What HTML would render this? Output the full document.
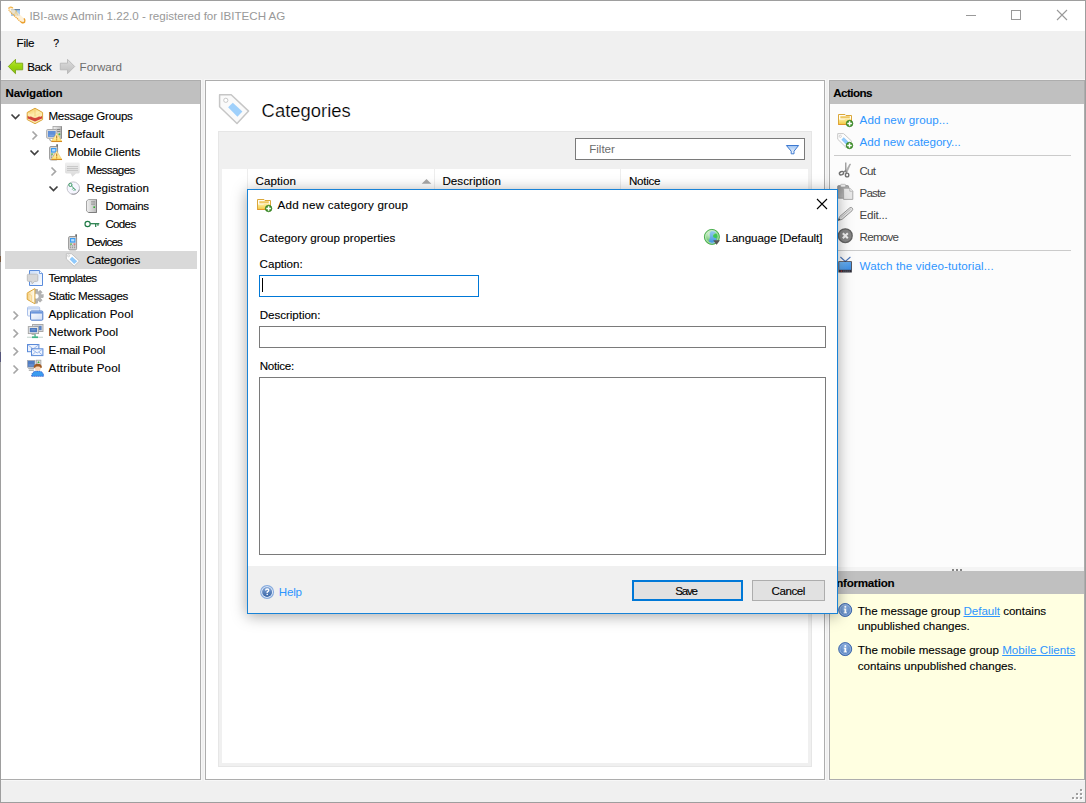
<!DOCTYPE html>
<html><head><meta charset="utf-8"><title>IBI-aws Admin</title>
<style>
html,body{margin:0;padding:0;}
body{width:1086px;height:803px;position:relative;overflow:hidden;background:#f0f0f0;font-family:"Liberation Sans",sans-serif;font-size:11.6px;color:#000;}
.a{position:absolute;}
.t{position:absolute;white-space:nowrap;-webkit-text-stroke:.12px;}
svg{position:absolute;overflow:visible;}
</style></head><body>
<div class="a" style="left:1px;top:1px;width:1084px;height:30px;background:#fff;"></div>

<!-- NAV PANEL -->
<div class="a" style="left:1px;top:80px;width:199px;height:698px;background:#fff;border-right:1px solid #adadad;border-bottom:1px solid #adadad;border-top:1px solid #adadad;outline:1px solid #f7f7f7;"></div>
<div class="a" style="left:1px;top:81px;width:199px;height:23px;background:#c0c0c0;"></div>
<div class="a" style="left:5px;top:251px;width:192px;height:18px;background:#d9d9d9;"></div>


<!-- CENTER PANEL -->
<div class="a" style="left:205px;top:80px;width:618px;height:698px;background:#fff;border:1px solid #adadad;outline:1px solid #f7f7f7;"></div>
<div class="a" style="left:218px;top:131px;width:592px;height:634px;background:#f0f0f0;border:1px solid #e6e6e6;"></div>
<div class="a" style="left:222px;top:169px;width:586px;height:594px;background:#fff;"></div>
<div class="a" style="left:247px;top:169px;width:1px;height:22px;background:#ededed;"></div>
<div class="a" style="left:434px;top:169px;width:1px;height:22px;background:#ededed;"></div>
<div class="a" style="left:620px;top:169px;width:1px;height:22px;background:#ededed;"></div>
<div class="a" style="left:575px;top:138px;width:228px;height:20px;border:1px solid #7a7a7a;background:#fff;"></div>

<!-- RIGHT PANEL -->
<div class="a" style="left:829px;top:80px;width:254px;height:698px;background:#fcfcfc;border:1px solid #adadad;outline:1px solid #f7f7f7;"></div>
<div class="a" style="left:830px;top:81px;width:254px;height:23px;background:#c0c0c0;"></div>
<div class="a" style="left:834px;top:155px;width:237px;height:1px;background:#cbcbcb;"></div>
<div class="a" style="left:834px;top:250px;width:237px;height:1px;background:#cbcbcb;"></div>
<div class="a" style="left:830px;top:571px;width:254px;height:23px;background:#c0c0c0;"></div>
<div class="a" style="left:830px;top:594px;width:254px;height:185px;background:#ffffe1;"></div>
<!-- window frame -->
<div class="a" style="left:0;top:0;width:1086px;height:1px;background:#9e9e9e;"></div>
<div class="a" style="left:0;top:0;width:1px;height:803px;background:#9e9e9e;"></div>
<div class="a" style="left:1085px;top:0;width:1px;height:803px;background:#9e9e9e;"></div>
<div class="a" style="left:0;top:802px;width:1086px;height:1px;background:#9e9e9e;"></div>
<svg width="1086" height="803" viewBox="0 0 1086 803" style="left:0;top:0">
<defs>
<linearGradient id="gGreen" x1="0" y1="0" x2="0" y2="1"><stop offset="0" stop-color="#bce63c"/><stop offset=".5" stop-color="#9ad60e"/><stop offset="1" stop-color="#86c010"/></linearGradient>
<linearGradient id="gGray" x1="0" y1="0" x2="0" y2="1"><stop offset="0" stop-color="#dedede"/><stop offset="1" stop-color="#bcbcbc"/></linearGradient>
<linearGradient id="gBoxTop" x1="0" y1="0" x2="1" y2="1"><stop offset="0" stop-color="#f3c04e"/><stop offset=".6" stop-color="#fdeeb0"/><stop offset="1" stop-color="#f7d36a"/></linearGradient>
<linearGradient id="gTower" x1="0" y1="0" x2="1" y2="0"><stop offset="0" stop-color="#f2f2f2"/><stop offset="1" stop-color="#b8b8b8"/></linearGradient>
<linearGradient id="gWarn" x1="0" y1="0" x2="0" y2="1"><stop offset="0" stop-color="#fffbe2"/><stop offset="1" stop-color="#ffe06a"/></linearGradient>
<linearGradient id="gBubble" x1="0" y1="0" x2="0" y2="1"><stop offset="0" stop-color="#efefef"/><stop offset="1" stop-color="#dadada"/></linearGradient>
<linearGradient id="gDoc" x1="0" y1="0" x2="1" y2="1"><stop offset="0" stop-color="#c9dcf8"/><stop offset="1" stop-color="#ffffff"/></linearGradient>
<linearGradient id="gHalfBox" x1="0" y1="0" x2="1" y2="0"><stop offset="0" stop-color="#f6cc78"/><stop offset=".55" stop-color="#fdeec8"/><stop offset="1" stop-color="#fffdf6"/></linearGradient>
<linearGradient id="gWin" x1="0" y1="0" x2="1" y2="1"><stop offset="0" stop-color="#ffffff"/><stop offset="1" stop-color="#cfdcf4"/></linearGradient>
<linearGradient id="gFolder" x1="0" y1="0" x2="0" y2="1"><stop offset="0" stop-color="#fdeea6"/><stop offset="1" stop-color="#f3cc48"/></linearGradient>
<linearGradient id="gClip" x1="0" y1="0" x2="1" y2="1"><stop offset="0" stop-color="#8a8a8a"/><stop offset="1" stop-color="#c8c8c8"/></linearGradient>
<linearGradient id="gTv" x1="0" y1="0" x2="1" y2="1"><stop offset="0" stop-color="#74baf6"/><stop offset="1" stop-color="#3a8ae2"/></linearGradient>
<radialGradient id="gInfo" cx=".5" cy=".35" r=".7"><stop offset="0" stop-color="#8fb2e0"/><stop offset="1" stop-color="#4874b6"/></radialGradient>
<linearGradient id="gFunnel" x1="0" y1="0" x2="0" y2="1"><stop offset="0" stop-color="#9cc2f2"/><stop offset="1" stop-color="#ffffff"/></linearGradient>
<g id="warn"><polygon points="56.7,133.2 61.7,141.3 51.6,141.3" fill="url(#gWarn)" stroke="#f0c454" stroke-width=".6" stroke-linejoin="round"/><line x1="51.4" y1="141.5" x2="62" y2="141.5" stroke="#d58a22" stroke-width="1.1"/><line x1="56.7" y1="135.4" x2="56.7" y2="138.4" stroke="#c07a1a" stroke-width="1.1"/><circle cx="56.7" cy="139.8" r=".65" fill="#c07a1a"/></g>
<g id="phone"><rect x="56.4" y="144.3" width="1.4" height="5" fill="#4a4a4a"/><rect x="49.6" y="146.5" width="8" height="13.4" rx="1.3" fill="#d4d4d4" stroke="#8c8c8c" stroke-width=".9"/><rect x="51" y="148" width="5.4" height="4.6" fill="#3c9cf0"/><rect x="52.1" y="149.1" width="3.2" height="2.3" fill="#b4dcff"/><rect x="51" y="153.6" width="2" height="1" fill="#3cb43c"/><rect x="54.6" y="153.6" width="1.8" height="1" fill="#e03c3c"/><g fill="#8e8e8e"><rect x="51" y="155.4" width="1.2" height="1"/><rect x="53" y="155.4" width="1.2" height="1"/><rect x="55" y="155.4" width="1.2" height="1"/><rect x="51" y="157.2" width="1.2" height="1"/><rect x="53" y="157.2" width="1.2" height="1"/><rect x="55" y="157.2" width="1.2" height="1"/></g></g>
<g id="plus"><circle cx="0" cy="0" r="3.3" fill="#3f902a" stroke="#2e7a1c" stroke-width=".6"/><path d="M-2.3 0H2.3M0 -2.3V2.3" stroke="#fff" stroke-width="1.5"/></g>
<g id="folder"><path d="M.5 .5H7L8 1.5H13.5V10.5H.5Z" fill="#fffdf2" stroke="#dba73a"/><rect x="2.3" y="2.2" width="9.5" height="2.2" fill="#efc862"/><path d="M1 5.6H6.4L7.4 4.7H13V10H1Z" fill="url(#gFolder)"/><line x1=".3" y1="10.5" x2="13.7" y2="10.5" stroke="#e3962e"/><use href="#plus" x="11.6" y="9.5"/></g>
</defs>
<!-- app icon -->
<rect x="11" y="9" width="9" height="7" fill="#a9cdf2"/><rect x="11" y="9" width="9" height="1.2" fill="#5f82aa"/>
<path d="M14.4 15.2L15.9 11.2L17.6 15.2" stroke="#a88a18" stroke-width="1.2" fill="none"/>
<path d="M9.2 7.6Q10.6 6.4 13 8L24 18.4Q25.6 20.6 24.6 22Q23.4 23.4 21 22.2L10 11.6Q8.2 9.2 9.2 7.6Z" fill="#fdeccc" fill-opacity=".72"/>
<path d="M9.2 7.6Q8.2 9.2 10 11.6L21 22.2Q23.4 23.4 24.6 22" fill="none" stroke="#eea83a" stroke-width="1.3" stroke-dasharray="1.3 .7"/>
<path d="M9.2 7.6Q10.6 6.4 13 8" fill="none" stroke="#f0b44a" stroke-width="1.2"/>
<path d="M21 22.2Q23.4 23.4 24.6 22Q25.6 20.6 24 18.4" fill="none" stroke="#eaa030" stroke-width="1.5"/>
<!-- back / forward -->
<polygon points="8.3,66.5 15.5,59.3 15.5,63.2 22.7,63.2 22.7,69.8 15.5,69.8 15.5,73.7" fill="url(#gGreen)" stroke="#79a516" stroke-width=".9" stroke-linejoin="round"/>
<polygon points="74.7,66.5 67.5,59.3 67.5,63.2 60.3,63.2 60.3,69.8 67.5,69.8 67.5,73.7" fill="url(#gGray)" stroke="#b8b8b8" stroke-width=".9" stroke-linejoin="round"/>
<rect x="0" y="61" width="1" height="9" fill="#55557a"/><rect x="0" y="256" width="1" height="6" fill="#7a5a40"/><rect x="0" y="352" width="1" height="10" fill="#55557a"/>
<!-- window controls -->
<rect x="966" y="15" width="10" height="1" fill="#999"/>
<rect x="1011.5" y="10.5" width="9" height="9" fill="none" stroke="#999"/>
<path d="M1057 10L1067 20M1067 10L1057 20" stroke="#999" stroke-width="1.1"/>
<!-- chevrons -->
<g fill="none" stroke="#404040" stroke-width="1.7"><path d="M11.5 114.5l4 4l4-4"/><path d="M30.5 150.5l4 4l4-4"/><path d="M49.5 186.5l4 4l4-4"/></g>
<g fill="none" stroke="#a6a6a6" stroke-width="1.7"><path d="M32.5 131.5l4 4l-4 4"/><path d="M51.5 167.5l4 4l-4 4"/><path d="M13.5 311.5l4 4l-4 4"/><path d="M13.5 329.5l4 4l-4 4"/><path d="M13.5 347.5l4 4l-4 4"/><path d="M13.5 365.5l4 4l-4 4"/></g>
<!-- message groups box -->
<polygon points="35,108.2 42.6,112.5 42.6,119.6 35,123.7 27.2,119.6 27.2,112.5" fill="#fdebae"/>
<polygon points="35,108.2 42.6,112.5 35,116.6 27.2,112.5" fill="url(#gBoxTop)"/>
<polygon points="27.2,115.6 29.2,116.8 31,116.4 33,117.6 35,118 37,117.6 39,116.4 40.8,116.8 42.6,115.6 42.6,118.3 35,121.5 27.2,118.3" fill="#d2453a"/><path d="M35 108.6V116.4" stroke="#f0c060" stroke-width=".6"/>
<polygon points="35,108.2 42.6,112.5 42.6,119.6 35,123.7 27.2,119.6 27.2,112.5" fill="none" stroke="#dba63c" stroke-width="1" stroke-linejoin="round"/>
<!-- default: tower + monitor + warn -->
<rect x="53" y="126.5" width="8.5" height="12" fill="url(#gTower)" stroke="#a2a2a2" stroke-width=".8"/><line x1="61.4" y1="126.5" x2="61.4" y2="138.5" stroke="#8a8a8a"/>
<path d="M57 129.5H60.3M57 131.5H60.3" stroke="#7e7e7e" stroke-width=".9"/><circle cx="59.4" cy="134.3" r="1" fill="#3cb43c"/>
<rect x="46.6" y="129.5" width="10.4" height="8.8" rx="1" fill="#dcdcdc" stroke="#a6a6a6" stroke-width=".9"/><rect x="48" y="131" width="7.6" height="5.9" fill="#5f8fd8"/><rect x="49.3" y="134.8" width="4.6" height=".8" fill="#8ab0e6"/>
<path d="M49.7 138.8q-.2 2.4 2.2 2.4" fill="none" stroke="#8c8c8c" stroke-width=".9"/>
<use href="#warn"/>
<!-- mobile clients -->
<use href="#phone"/><use href="#warn" y="18"/>
<!-- messages bubble -->
<path d="M66.4 162.5H78.3q1.4 0 1.4 1.4V172.1q0 1.4-1.4 1.4H76L72.4 176.8L70.6 173.5H66.4q-1.4 0-1.4-1.4V163.9q0-1.4 1.4-1.4Z" fill="url(#gBubble)"/>
<path d="M67 166.6H78M67 168.5H78M67 170.4H78" stroke="#c2c2c2" stroke-width=".9"/>
<!-- registration -->
<circle cx="73.3" cy="188.1" r="6.2" fill="#f6f6ff" stroke="#c4c4cc" stroke-width="1"/><path d="M79.3 189.6A6.2 6.2 0 0 1 71.5 194" fill="none" stroke="#9a9aa0" stroke-width="1"/>
<circle cx="70.4" cy="184.9" r="1.6" fill="none" stroke="#3a9a62" stroke-width="1"/><path d="M71.5 186L75.8 190.2M73.6 188.1l-1.3 1.4M75 189.4l-1.2 1.3" stroke="#3a9a62" stroke-width="1" fill="none"/>
<!-- domains -->
<path d="M88.5 199.5H96.5V212.5H88.5L86.5 211V201Z" fill="url(#gTower)" stroke="#9c9c9c" stroke-width=".9" stroke-linejoin="round"/><path d="M96.5 199.5V212.5H88.5" fill="none" stroke="#7e7e7e" stroke-width="1"/>
<path d="M91 201.9H95M91 204.1H95" stroke="#7c7c7c" stroke-width=".75"/><rect x="93.4" y="206.4" width="1.6" height="1.6" fill="#30b030"/>
<!-- codes key -->
<circle cx="87.6" cy="224" r="2.6" fill="none" stroke="#1f7a45" stroke-width="1.15"/><path d="M90.2 223.7H99.3" stroke="#1f7a45" stroke-width="1.2"/><rect x="95.1" y="224" width="1.2" height="3" fill="#1f7a45"/><rect x="97.4" y="224" width="1.1" height="1.8" fill="#1f7a45"/>
<!-- devices -->
<use href="#phone" x="19" y="90"/>
<!-- categories small tag -->
<polygon points="66.3,253.7 71.5,253.7 79.5,261 74.2,266.2 66.3,259" fill="#fdfdfd" stroke="#c2c2c2" stroke-width="1" stroke-linejoin="round"/><circle cx="68.6" cy="255.8" r="1" fill="#fff" stroke="#c4c4c4" stroke-width=".7"/><polygon points="72.1,256.8 77.2,261.3 74.2,264 69.6,259.2" fill="#8fc9fb"/>
<!-- templates -->
<path d="M29.5 270.5H39.5L42.5 273.5V285.5H29.5Z" fill="url(#gDoc)" stroke="#5a8cdc" stroke-width="1" stroke-linejoin="round"/><path d="M39.5 270.5V273.5H42.5" fill="#fff" stroke="#5a8cdc" stroke-width=".8"/>
<path d="M28.5 274.2H36.6q1.2 0 1.2 1.2V280.2q0 1.2-1.2 1.2H34.6L32.2 283.8L31.4 281.4H28.5q-1.2 0-1.2-1.2V275.4q0-1.2 1.2-1.2Z" fill="#d8d8d8" stroke="#b6b6b6" stroke-width=".8"/>
<!-- static messages: gear right half + half box -->
<g transform="translate(36.2 296.2)"><g fill="#b0b0b0" stroke="#989898" stroke-width=".4"><rect x="-1.5" y="-7" width="3" height="14"/><rect x="-1.5" y="-7" width="3" height="14" transform="rotate(45)"/><rect x="-1.5" y="-7" width="3" height="14" transform="rotate(90)"/><rect x="-1.5" y="-7" width="3" height="14" transform="rotate(135)"/></g><circle r="5.3" fill="#b4b4b4"/><circle r="2.7" fill="#fff" stroke="#9c9c9c" stroke-width=".4"/></g>
<rect x="26" y="287" width="8.9" height="18" fill="#fff"/>
<polygon points="34.9,288.6 27.2,293 27.2,299.4 34.9,303.8" fill="url(#gHalfBox)" stroke="#dba63c" stroke-width="1" stroke-linejoin="round"/><path d="M27.4 293.2L31.6 295.6V301.6" fill="none" stroke="#f6d184" stroke-width=".8"/>
<!-- application pool -->
<rect x="27.5" y="307" width="12.2" height="9" rx="1" fill="#f1f5fc" stroke="#a9c0ea" stroke-width="1"/><rect x="28" y="307.5" width="11.2" height="2" fill="#c6d7f4"/>
<rect x="30.6" y="311" width="12.2" height="9.2" rx="1" fill="url(#gWin)" stroke="#4a78c8" stroke-width="1"/><rect x="31.1" y="311.5" width="11.2" height="2.1" fill="#6b96dc"/>
<!-- network pool -->
<rect x="32.6" y="324.5" width="10.4" height="7" fill="#e2e2e2" stroke="#a2a2a2" stroke-width=".9"/><rect x="34.2" y="325.8" width="7.4" height="4.4" fill="#5a84c6"/>
<rect x="28.3" y="326.6" width="10.3" height="7" fill="#e6e6e6" stroke="#a2a2a2" stroke-width=".9"/><rect x="29.8" y="328" width="7.3" height="4.2" fill="#4a78c0"/><rect x="31.3" y="329.4" width="4.3" height=".9" fill="#86a8dc"/>
<path d="M31.6 334.4H35.6" stroke="#a0a0a0" stroke-width=".9"/>
<rect x="27" y="336.7" width="16" height="1.1" fill="#c6d6d2"/><rect x="32" y="336.4" width="6" height="1.7" fill="#42b585"/><rect x="34.4" y="334.4" width="1.3" height="2.4" fill="#42b585"/>
<!-- e-mail pool -->
<rect x="27.5" y="344.5" width="11.4" height="7.2" fill="#ecf2fd" stroke="#5a8ad8" stroke-width="1"/><path d="M27.8 344.8L33.2 349L38.6 344.8" fill="none" stroke="#86aae6" stroke-width=".8"/>
<rect x="31.5" y="348.8" width="11.4" height="6.8" fill="#f0f5fe" stroke="#5a8ad8" stroke-width="1"/><path d="M31.8 349.1L37.2 353L42.6 349.1M31.8 355.3L35.6 352M42.6 355.3L38.8 352" fill="none" stroke="#86aae6" stroke-width=".8"/>
<!-- attribute pool -->
<rect x="36.3" y="360.2" width="4.6" height="7" fill="#dadada" stroke="#a4a4a4" stroke-width=".8"/><polygon points="37.4,363 38.6,361 39.6,363" fill="#3cb43c"/>
<rect x="27.4" y="360.4" width="7.6" height="6.8" fill="#4f7cc2" stroke="#a6aab2" stroke-width=".8"/><rect x="28.6" y="364.6" width="5" height=".8" fill="#86a8dc"/>
<rect x="28.2" y="368" width="6" height="1" fill="#b4b4b4"/><rect x="28.8" y="369.7" width="5" height=".9" fill="#8a8a8a"/>
<path d="M31.6 376.3Q31.6 371 37.8 371Q43.6 371 43.6 376.3Z" fill="#3c9cf0" stroke="#2a4cc4" stroke-width=".9" stroke-dasharray="1.2 .8"/>
<circle cx="37.8" cy="367.7" r="3.1" fill="#f8d6b8"/><path d="M34.6 367.6A3.2 3.2 0 0 1 41 367.6Q39.5 366.2 37.8 366.6Q36 366.2 34.6 367.6Z" fill="#a05a22"/><path d="M34.5 367.8A3.3 3.3 0 0 1 41.1 367.8" fill="none" stroke="#a05a22" stroke-width="1.6"/>
<!-- big tag -->
<polygon points="219.6,94.7 231.2,94.7 248.6,111.1 237,123.5 219.6,106.8" fill="#fafafa" stroke="#c6c6c6" stroke-width="1.5" stroke-linejoin="round"/><circle cx="225.8" cy="100.3" r="2.1" fill="#fff" stroke="#c8c8c8" stroke-width="1"/><polygon points="232.8,102.7 242.4,111.5 237.4,116.7 228.1,107.3" fill="#9fd0fb"/>
<!-- funnel + sort -->
<path d="M786.4 145.5H798.6L794 151.2V153.8H791.2V151.2Z" fill="url(#gFunnel)" stroke="#3c78d0" stroke-width="1" stroke-linejoin="round"/>
<polygon points="421.7,183.8 426.5,179 431.3,183.8" fill="#a8a8a8"/>
<!-- actions: folder+plus, tag+plus -->
<use href="#folder" x="838" y="114"/>
<polygon points="837.7,133.6 843.6,133.6 851.7,141.2 846,147.4 837.7,139.2" fill="#fdfdfd" stroke="#c8c8c8" stroke-width="1" stroke-linejoin="round"/><circle cx="840.3" cy="136.3" r="1.1" fill="#fff" stroke="#c0c0c0" stroke-width=".7"/><polygon points="843.7,137.3 848.7,141.9 846,144.6 841.4,139.8" fill="#8fc9fb"/>
<use href="#plus" x="849.5" y="145.5"/>
<!-- scissors -->
<path d="M845.1 162.4L846.4 162.6L846.6 172.2L845 172Z" fill="#9c9c9c"/><path d="M850.6 164L846.9 172.6L845.6 171.6L849.6 164.2Z" fill="#bcbcbc" stroke="#8c8c8c" stroke-width=".5"/>
<ellipse cx="841.5" cy="173.2" rx="2.2" ry="1.6" transform="rotate(-25 841.5 173.2)" fill="none" stroke="#707070" stroke-width="1.4"/><ellipse cx="847.1" cy="175" rx="1.7" ry="1.9" fill="none" stroke="#707070" stroke-width="1.4"/>
<path d="M843.4 172L845.8 170.6M846.4 173.2L845.8 170.6" stroke="#7e7e7e" stroke-width="1.2"/>
<!-- paste -->
<rect x="837.6" y="185.6" width="11" height="12.6" rx="1" fill="url(#gClip)" stroke="#8a8a8a" stroke-width=".8"/><rect x="840.6" y="184.3" width="5" height="2.6" rx=".8" fill="#ececec" stroke="#a2a2a2" stroke-width=".6"/>
<path d="M843.6 188.2H849.8L852.8 191.2V199.4H843.6Z" fill="#e8e8e8" stroke="#a4a4a4" stroke-width=".9" stroke-linejoin="round"/><path d="M849.8 188.2V191.2H852.8" fill="#f6f6f6" stroke="#a4a4a4" stroke-width=".7"/>
<!-- pencil -->
<path d="M838 220.6L839.6 216.6L849.8 207.8Q851.4 206.8 852.4 208.2Q853.2 209.6 852 210.8L842 219.4Z" fill="#e6e6e6" stroke="#8e8e8e" stroke-width=".9" stroke-linejoin="round"/><path d="M838 220.6L839 218.2L840.6 219.8Z" fill="#4a4a4a"/><path d="M840.6 217.8L850.8 209" stroke="#b4b4b4" stroke-width=".8"/>
<!-- remove -->
<circle cx="845.3" cy="235.7" r="6.9" fill="#868686" stroke="#626262" stroke-width="1.3"/><path d="M842.8 233.2L847.8 238.2M847.8 233.2L842.8 238.2" stroke="#f2f2f2" stroke-width="2"/>
<!-- tv -->
<path d="M840.4 257L845.3 261.4L850.4 257" fill="none" stroke="#4a74b8" stroke-width="1.1"/>
<rect x="838.4" y="261.3" width="13.4" height="11.2" fill="#2e2e3a"/><rect x="839.2" y="262" width="11.8" height="7.8" fill="url(#gTv)"/><rect x="840.8" y="270.6" width="1.3" height="1" fill="#e23434"/><path d="M843.4 271.1H850" stroke="#8a8a96" stroke-width=".9" stroke-dasharray="1 1"/>
<!-- splitter dots -->
<rect x="830" y="567" width="254" height="4" fill="#f4f4f4"/><g fill="#858585"><rect x="952" y="569" width="2" height="2"/><rect x="956" y="569" width="2" height="2"/><rect x="960" y="569" width="2" height="2"/></g>
<!-- info icons -->
<g id="info"><circle cx="845.2" cy="610" r="6.5" fill="url(#gInfo)" stroke="#3f68ac" stroke-width="1"/><circle cx="845.2" cy="610" r="5.3" fill="none" stroke="#a6c0e6" stroke-width=".7"/><rect x="844.5" y="608.7" width="1.7" height="4.2" fill="#fff"/><rect x="843.8" y="608.7" width="1.5" height=".9" fill="#fff"/><rect x="843.6" y="612.4" width="3.4" height=".9" fill="#fff"/><circle cx="845.3" cy="606.8" r="1" fill="#fff"/></g>
<use href="#info" y="39.1"/>
<!-- resize grip -->
<g fill="#fff"><rect x="1081" y="790" width="2" height="2"/><rect x="1077" y="794" width="2" height="2"/><rect x="1081" y="794" width="2" height="2"/><rect x="1073" y="798" width="2" height="2"/><rect x="1077" y="798" width="2" height="2"/><rect x="1081" y="798" width="2" height="2"/></g>
<g fill="#a0a0a0"><rect x="1080" y="789" width="2" height="2"/><rect x="1076" y="793" width="2" height="2"/><rect x="1080" y="793" width="2" height="2"/><rect x="1072" y="797" width="2" height="2"/><rect x="1076" y="797" width="2" height="2"/><rect x="1080" y="797" width="2" height="2"/></g>
</svg>


<div class="t" style="left:29.40px;top:8.00px;line-height:16px;letter-spacing:-0.011px;color:#999;-webkit-text-stroke:0;">IBI-aws Admin 1.22.0 - registered for IBITECH AG</div>
<div class="t" style="left:16.60px;top:35.00px;line-height:16px;letter-spacing:-0.278px;">File</div>
<div class="t" style="left:53.30px;top:35.00px;line-height:16px;letter-spacing:-1.300px;font-size:10.5px;">?</div>
<div class="t" style="left:27.20px;top:59.00px;line-height:16px;letter-spacing:-0.393px;">Back</div>
<div class="t" style="left:79.60px;top:59.00px;line-height:16px;letter-spacing:-0.029px;color:#6d6d6d;-webkit-text-stroke:0;">Forward</div>
<div class="t" style="left:5.50px;top:85.00px;line-height:16px;letter-spacing:-0.231px;font-weight:bold;">Navigation</div>
<div class="t" style="left:48.50px;top:108.00px;line-height:16px;letter-spacing:-0.299px;">Message Groups</div>
<div class="t" style="left:67.50px;top:126.00px;line-height:16px;letter-spacing:0.014px;">Default</div>
<div class="t" style="left:67.50px;top:144.00px;line-height:16px;letter-spacing:-0.001px;">Mobile Clients</div>
<div class="t" style="left:86.60px;top:162.00px;line-height:16px;letter-spacing:-0.592px;">Messages</div>
<div class="t" style="left:86.60px;top:180.00px;line-height:16px;letter-spacing:0.035px;">Registration</div>
<div class="t" style="left:105.40px;top:198.00px;line-height:16px;letter-spacing:-0.342px;">Domains</div>
<div class="t" style="left:105.40px;top:216.00px;line-height:16px;letter-spacing:-0.679px;">Codes</div>
<div class="t" style="left:86.60px;top:234.00px;line-height:16px;letter-spacing:-0.823px;">Devices</div>
<div class="t" style="left:86.60px;top:252.00px;line-height:16px;letter-spacing:-0.263px;">Categories</div>
<div class="t" style="left:48.50px;top:270.00px;line-height:16px;letter-spacing:-0.530px;">Templates</div>
<div class="t" style="left:48.50px;top:288.00px;line-height:16px;letter-spacing:-0.376px;">Static Messages</div>
<div class="t" style="left:48.50px;top:306.00px;line-height:16px;letter-spacing:0.109px;">Application Pool</div>
<div class="t" style="left:48.50px;top:324.00px;line-height:16px;letter-spacing:0.066px;">Network Pool</div>
<div class="t" style="left:48.50px;top:342.00px;line-height:16px;letter-spacing:-0.250px;">E-mail Pool</div>
<div class="t" style="left:48.50px;top:360.00px;line-height:16px;letter-spacing:0.175px;">Attribute Pool</div>
<div class="t" style="left:261.60px;top:98.00px;line-height:25px;letter-spacing:0.018px;font-size:18.4px;-webkit-text-stroke:.2px #fff;">Categories</div>
<div class="t" style="left:589.30px;top:141.00px;line-height:16px;letter-spacing:-0.040px;color:#6d6d6d;-webkit-text-stroke:0;">Filter</div>
<div class="t" style="left:255.50px;top:173.00px;line-height:16px;letter-spacing:0.064px;">Caption</div>
<div class="t" style="left:442.40px;top:173.00px;line-height:16px;letter-spacing:0.046px;">Description</div>
<div class="t" style="left:629.00px;top:173.00px;line-height:16px;letter-spacing:-0.263px;">Notice</div>
<div class="t" style="left:833.20px;top:85.00px;line-height:16px;letter-spacing:-0.544px;font-weight:bold;">Actions</div>
<div class="t" style="left:859.60px;top:112.00px;line-height:16px;letter-spacing:0.091px;color:#2e95ff;-webkit-text-stroke:0;">Add new group...</div>
<div class="t" style="left:859.60px;top:134.00px;line-height:16px;letter-spacing:-0.027px;color:#2e95ff;-webkit-text-stroke:0;">Add new category...</div>
<div class="t" style="left:859.60px;top:163.00px;line-height:16px;letter-spacing:-0.860px;color:#444;-webkit-text-stroke:0;">Cut</div>
<div class="t" style="left:859.60px;top:185.00px;line-height:16px;letter-spacing:-0.825px;color:#444;-webkit-text-stroke:0;">Paste</div>
<div class="t" style="left:859.60px;top:207.00px;line-height:16px;letter-spacing:-0.253px;color:#444;-webkit-text-stroke:0;">Edit...</div>
<div class="t" style="left:859.60px;top:229.00px;line-height:16px;letter-spacing:-0.745px;color:#444;-webkit-text-stroke:0;">Remove</div>
<div class="t" style="left:859.60px;top:258.00px;line-height:16px;letter-spacing:0.115px;color:#2e95ff;-webkit-text-stroke:0;">Watch the video-tutorial...</div>
<div class="t" style="left:833.20px;top:575.00px;line-height:16px;letter-spacing:-0.238px;font-weight:bold;">Information</div>
<div class="t" style="left:857.80px;top:603.00px;line-height:16px;letter-spacing:-0.036px;">The message group <span style="color:#2e95ff;-webkit-text-stroke:0;text-decoration:underline">Default</span> contains</div>
<div class="t" style="left:857.80px;top:618.00px;line-height:16px;letter-spacing:-0.041px;">unpublished changes.</div>
<div class="t" style="left:857.80px;top:642.00px;line-height:16px;letter-spacing:0.026px;">The mobile message group <span style="color:#2e95ff;-webkit-text-stroke:0;text-decoration:underline">Mobile Clients</span></div>
<div class="t" style="left:857.80px;top:658.00px;line-height:16px;letter-spacing:-0.017px;">contains unpublished changes.</div>

<!-- DIALOG -->
<div class="a" style="left:247px;top:189px;width:589px;height:423px;border:1px solid #1883d7;background:#fff;box-shadow:0 2px 14px rgba(0,0,0,.35);"></div>
<div class="a" style="left:248px;top:566px;width:589px;height:47px;background:#f0f0f0;"></div>
<div class="a" style="left:259px;top:275px;width:218px;height:20px;border:1px solid #0078d7;background:#fff;"></div>
<div class="a" style="left:262px;top:278px;width:1px;height:14px;background:#000;"></div>
<div class="a" style="left:259px;top:326px;width:565px;height:20px;border:1px solid #7a7a7a;background:#fff;"></div>
<div class="a" style="left:259px;top:377px;width:565px;height:176px;border:1px solid #7a7a7a;background:#fff;"></div>
<div class="a" style="left:632px;top:580px;width:107px;height:17px;border:2px solid #0078d7;background:#e1e1e1;"></div>
<div class="a" style="left:752px;top:580px;width:71px;height:19px;border:1px solid #adadad;background:#e1e1e1;"></div>
<svg width="1086" height="803" viewBox="0 0 1086 803" style="left:0;top:0">
<defs>
<radialGradient id="gGlobe" cx=".35" cy=".3" r=".8"><stop offset="0" stop-color="#dcf2da"/><stop offset=".45" stop-color="#86d28a"/><stop offset="1" stop-color="#44ac4a"/></radialGradient>
<linearGradient id="gSea" x1="0" y1="0" x2="0" y2="1"><stop offset="0" stop-color="#9ad0f2"/><stop offset="1" stop-color="#3a8ede"/></linearGradient>
<linearGradient id="gHelp" x1="0" y1="0" x2="0" y2="1"><stop offset="0" stop-color="#86a8d8"/><stop offset="1" stop-color="#3562a4"/></linearGradient>
</defs>
<use href="#folder" x="257" y="199"/>
<path d="M817 199L827 209M827 199L817 209" stroke="#000" stroke-width="1.1"/>
<!-- globe -->
<circle cx="711.9" cy="236.9" r="7.5" fill="url(#gGlobe)" stroke="#4cb050" stroke-width="1"/>
<path d="M711.6 230.4Q715.6 230.6 716.2 232.4Q712.8 233.6 712.8 235.6Q714.6 237.6 716.6 238.8Q716.4 242.8 712.6 243.8Q709.6 243.6 708.8 240.6Q710.4 237.6 709.8 235.6Q708.8 233.2 711.6 230.4Z" fill="url(#gSea)"/>
<ellipse cx="715.7" cy="236" rx="2.7" ry="1.9" fill="#3cc65a"/>
<circle cx="711.9" cy="236.9" r="6.3" fill="none" stroke="#e2f6d4" stroke-width=".8" stroke-opacity=".85"/>
<polygon points="713.2,240.3 720,240.3 716.6,244.7" fill="#565656"/>
<!-- help -->
<circle cx="267.1" cy="592" r="7" fill="#86abde"/><circle cx="267.1" cy="592" r="5.8" fill="#f4f8fe"/><circle cx="267.1" cy="592" r="5" fill="url(#gHelp)"/>
<path d="M265.6 590.6Q265.6 589 267.2 589Q268.8 589 268.8 590.3Q268.8 591.2 267.2 592.1V592.9" fill="none" stroke="#fff" stroke-width="1.3"/><rect x="266.5" y="593.8" width="1.4" height="1.3" fill="#fff"/>
</svg>

<div class="t" style="left:277.60px;top:197.00px;line-height:16px;letter-spacing:0.222px;">Add new category group</div>
<div class="t" style="left:259.60px;top:230.00px;line-height:16px;letter-spacing:0.042px;">Category group properties</div>
<div class="t" style="left:725.60px;top:230.00px;line-height:16px;letter-spacing:-0.068px;">Language [Default]</div>
<div class="t" style="left:259.60px;top:256.00px;line-height:16px;letter-spacing:-0.009px;">Caption:</div>
<div class="t" style="left:259.70px;top:307.00px;line-height:16px;letter-spacing:-0.036px;">Description:</div>
<div class="t" style="left:259.70px;top:358.00px;line-height:16px;letter-spacing:-0.260px;">Notice:</div>
<div class="t" style="left:278.70px;top:584.00px;line-height:16px;letter-spacing:-0.165px;color:#2e95ff;-webkit-text-stroke:0;">Help</div>
<div class="t" style="left:675.30px;top:583.00px;line-height:16px;letter-spacing:-1.226px;">Save</div>
<div class="t" style="left:771.50px;top:583.00px;line-height:16px;letter-spacing:-0.443px;">Cancel</div>
</body></html>
